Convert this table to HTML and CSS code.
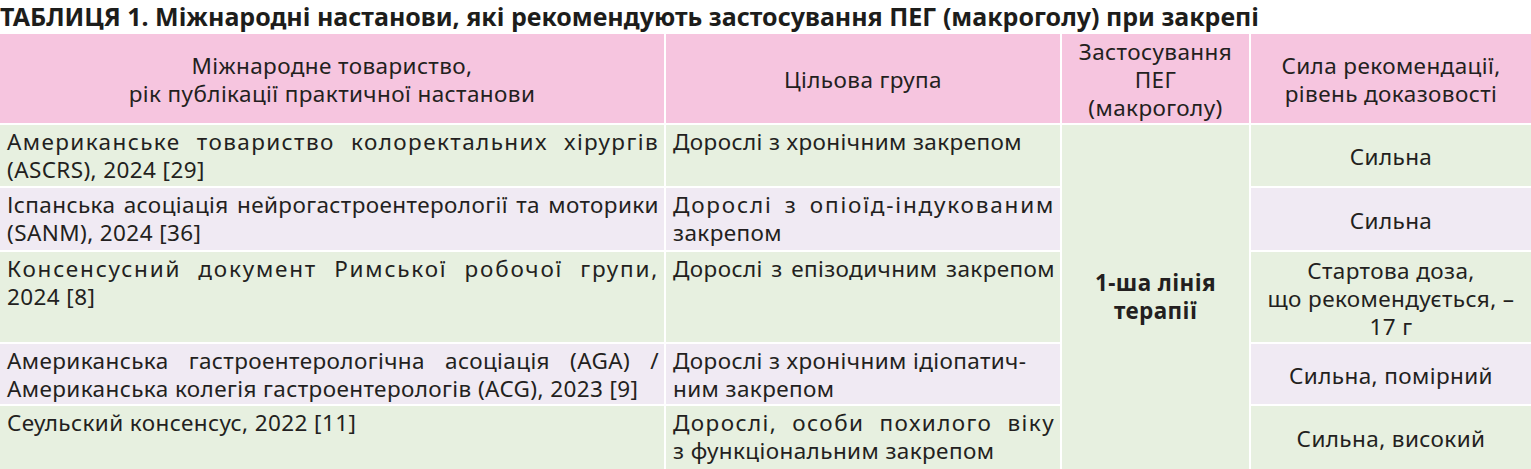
FILE: index.html
```html
<!DOCTYPE html>
<html lang="uk">
<head>
<meta charset="utf-8">
<title>Таблиця 1</title>
<link rel="stylesheet" href="styles.css">
</head>
<body>
<h1 class="title">ТАБЛИЦЯ 1. Міжнародні настанови, які рекомендують застосування ПЕГ (макроголу) при закрепі</h1>
<div class="table">
  <div class="cell head">Міжнародне товариство,<br>рік публікації практичної настанови</div>
  <div class="cell head">Цільова група</div>
  <div class="cell head">Застосування<br>ПЕГ<br>(макроголу)</div>
  <div class="cell head">Сила рекомендації,<br>рівень доказовості</div>

  <div class="cell text green"><span class="line loose">Американське товариство колоректальних хірургів</span>(ASCRS), 2024 [29]</div>
  <div class="cell text green">Дорослі з&nbsp;хронічним закрепом</div>
  <div class="cell merged green">1-ша лінія<br>терапії</div>
  <div class="cell level green">Сильна</div>

  <div class="cell text lilac"><span class="line">Іспанська асоціація нейрогастроентерології та моторики</span>(SANM), 2024 [36]</div>
  <div class="cell text lilac"><span class="line looser">Дорослі з&nbsp;опіоїд-індукованим</span>закрепом</div>
  <div class="cell level lilac">Сильна</div>

  <div class="cell text green"><span class="line looser">Консенсусний документ Римської робочої групи,</span>2024 [8]</div>
  <div class="cell text green"><span class="line">Дорослі з&nbsp;епізодичним закрепом</span></div>
  <div class="cell level green">Стартова доза,<br>що рекомендується, –<br>17 г</div>

  <div class="cell text lilac"><span class="line">Американська гастроентерологічна асоціація (AGA) /</span>Американська колегія гастроентерологів (ACG), 2023 [9]</div>
  <div class="cell text lilac">Дорослі з&nbsp;хронічним ідіопатич-<br>ним закрепом</div>
  <div class="cell level lilac">Сильна, помірний</div>

  <div class="cell text green">Сеульский консенсус, 2022 [11]</div>
  <div class="cell text green"><span class="line loose">Дорослі, особи похилого віку</span>з&nbsp;функціональним закрепом</div>
  <div class="cell level green">Сильна, високий</div>
</div>
</body>
</html>
```

FILE: styles.css
```css
html, body {
  margin: 0;
  padding: 0;
  background: #ffffff;
}

body {
  font-family: "Noto Sans", "Open Sans", "DejaVu Sans", sans-serif;
  color: #231f20;
  width: 1531px;
  height: 469px;
  overflow: hidden;
}

.title {
  margin: 0;
  height: 34px;
  font-size: 25px;
  font-weight: 700;
  line-height: 33px;
  color: #1d1d1b;
  white-space: nowrap;
}

.table {
  display: grid;
  grid-template-columns: 664px 394px 187px 280px;
  grid-template-rows: 89px 61px 62px 90px 60px 63px;
  gap: 2px;
}

.cell {
  font-size: 22.5px;
  line-height: 28px;
  letter-spacing: 0.4px;
}

.head {
  background: #f6c5df;
  display: flex;
  align-items: center;
  justify-content: center;
  text-align: center;
  padding-top: 3px;
}

.green {
  background: #e7f0e0;
}

.lilac {
  background: #f0eaf3;
}

.text {
  text-align: left;
  padding: 3px 5px 0 7px;
}

.line {
  display: block;
  white-space: nowrap;
  text-align: justify;
  text-align-last: justify;
}

.loose {
  letter-spacing: 1.4px;
}

.looser {
  letter-spacing: 1.8px;
}

.merged {
  grid-column: 3;
  grid-row: 2 / span 5;
  display: flex;
  align-items: center;
  justify-content: center;
  text-align: center;
  font-weight: 700;
}

.level {
  grid-column: 4;
  display: flex;
  align-items: center;
  justify-content: center;
  text-align: center;
  padding-top: 3px;
}
```
